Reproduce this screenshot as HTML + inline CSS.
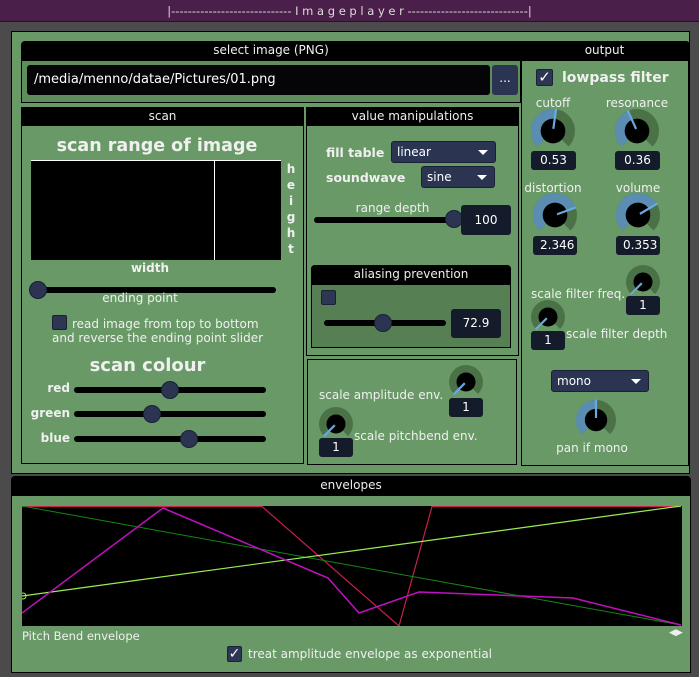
<!DOCTYPE html>
<html><head><meta charset="utf-8">
<style>
*{margin:0;padding:0;box-sizing:border-box}
body{width:699px;height:677px;background:#4b4b4b;font-family:"DejaVu Sans","Liberation Sans",sans-serif;color:#f0f0f0;position:relative;overflow:hidden;font-size:12px}
.a{position:absolute}
.hdr{position:absolute;background:#000;color:#eee;text-align:center;font-size:12px;line-height:19px;border-radius:4px 4px 0 0}
.pan{position:absolute;border:1px solid #000}
.box{position:absolute;background:#141b2b;border-radius:3px;color:#fff;text-align:center;font-size:12px}
.tr{position:absolute;height:6px;background:#000;border-radius:3px}
.th{position:absolute;width:18px;height:18px;border-radius:50%;background:#2b3552;border:1px solid #1a2035}
.cb{position:absolute;width:15px;height:15px;background:#2d3754;border:1px solid #1a2035;border-radius:2px}
.dd{position:absolute;background:#2b3552;border:1px solid #1a2035;border-radius:3px;color:#fff;font-size:12px;padding-left:5px}
.dd:after{content:"";position:absolute;right:7px;top:50%;margin-top:-2px;border-left:5px solid transparent;border-right:5px solid transparent;border-top:5px solid #fff}
.t{position:absolute;white-space:nowrap}
.b{font-weight:bold}
</style></head><body>
<div class="a" style="left:0;top:0;width:699px;height:22px;background:#4a1f4a;border-bottom:1px solid #2a102a"></div>
<div class="t" style="left:0;width:699px;top:4px;text-align:center;font-size:11.5px;color:#ddd">|----------------------------- I m a g e p l a y e r -----------------------------|</div>

<div class="a" style="left:11px;top:31px;width:679px;height:443px;background:#689966;border:1px solid #000"></div>

<div class="hdr" style="left:21px;top:41px;width:669px;height:20px"></div>
<div class="t" style="left:21px;width:500px;top:43px;text-align:center">select image (PNG)</div>
<div class="t" style="left:521px;width:167px;top:43px;text-align:center">output</div>
<div class="a" style="left:21px;top:61px;width:500px;height:42px;background:#5e8e5c;border:1px solid #000;border-top:0"></div>
<div class="box" style="left:27px;top:65px;width:463px;height:30px;text-align:left;padding-left:7px;line-height:30px;font-size:13px;background:#050508">/media/menno/datae/Pictures/01.png</div>
<div class="box" style="left:492px;top:65px;width:26px;height:30px;line-height:26px;background:#2b3552">...</div>

<div class="pan" style="left:21px;top:107px;width:283px;height:357px"></div>
<div class="hdr" style="left:21px;top:107px;width:283px;height:19px">scan</div>
<div class="t b" style="left:22px;width:270px;top:136px;text-align:center;font-size:17.5px">scan range of image</div>
<div class="a" style="left:31px;top:160px;width:250px;height:100px;background:#000;border-top:1px solid #fff"></div>
<div class="a" style="left:214px;top:160px;width:1px;height:100px;background:#fff"></div>
<div class="t b" style="left:286px;top:161px;font-size:12px;line-height:16px;text-align:center;width:10px">h<br>e<br>i<br>g<br>h<br>t</div>
<div class="t b" style="left:100px;width:100px;top:261px;text-align:center">width</div>
<div class="tr" style="left:33px;top:287px;width:243px"></div><div class="th" style="left:29px;top:281px"></div>
<div class="t" style="left:80px;width:120px;top:291px;text-align:center">ending point</div>
<div class="cb" style="left:52px;top:315px"></div>
<div class="t" style="left:72px;top:317px;font-size:12px">read image from top to bottom</div>
<div class="t" style="left:52px;top:331px;font-size:12px">and reverse the ending point slider</div>
<div class="t b" style="left:40px;width:215px;top:355px;text-align:center;font-size:18px">scan colour</div>
<div class="t b" style="left:20px;width:50px;top:381px;text-align:right">red</div>
<div class="t b" style="left:20px;width:50px;top:406px;text-align:right">green</div>
<div class="t b" style="left:20px;width:50px;top:431px;text-align:right">blue</div>
<div class="tr" style="left:74px;top:387px;width:192px"></div><div class="th" style="left:161px;top:381px"></div>
<div class="tr" style="left:74px;top:411px;width:192px"></div><div class="th" style="left:143px;top:405px"></div>
<div class="tr" style="left:74px;top:436px;width:192px"></div><div class="th" style="left:180px;top:430px"></div>

<div class="pan" style="left:306px;top:107px;width:213px;height:249px"></div>
<div class="hdr" style="left:306px;top:107px;width:213px;height:19px">value manipulations</div>
<div class="t b" style="left:326px;top:145px;font-size:12.5px">fill table</div>
<div class="dd" style="left:391px;top:141px;width:105px;height:22px;line-height:20px">linear</div>
<div class="t b" style="left:326px;top:170px;font-size:12.5px">soundwave</div>
<div class="dd" style="left:421px;top:166px;width:74px;height:22px;line-height:20px">sine</div>
<div class="t" style="left:340px;width:105px;top:201px;text-align:center">range depth</div>
<div class="tr" style="left:314px;top:217px;width:143px"></div><div class="th" style="left:445px;top:210px"></div>
<div class="box" style="left:461px;top:205px;width:50px;height:30px;line-height:30px">100</div>
<div class="a" style="left:311px;top:265px;width:200px;height:83px;background:#567f54;border:1px solid #000;border-radius:4px 4px 0 0"></div>
<div class="hdr" style="left:311px;top:265px;width:200px;height:20px">aliasing prevention</div>
<div class="cb" style="left:321px;top:290px"></div>
<div class="tr" style="left:324px;top:320px;width:122px"></div><div class="th" style="left:374px;top:314px"></div>
<div class="box" style="left:451px;top:309px;width:50px;height:29px;line-height:29px">72.9</div>

<div class="pan" style="left:307px;top:359px;width:210px;height:106px"></div>
<div class="t" style="left:319px;top:388px;font-size:12px">scale amplitude env.</div>
<div class="t" style="left:354px;top:429px;font-size:12px">scale pitchbend env.</div>
<div class="box" style="left:449px;top:398px;width:34px;height:19px;line-height:19px">1</div>
<div class="box" style="left:319px;top:438px;width:34px;height:19px;line-height:19px">1</div>

<div class="pan" style="left:521px;top:60px;width:168px;height:406px;border-top:0"></div>
<div class="cb" style="left:536px;top:69px;width:17px;height:17px;color:#fff;font-size:15px;line-height:14px;text-align:center">✓</div>
<div class="t b" style="left:562px;top:70px;font-size:14px">lowpass filter</div>
<div class="t" style="left:513px;width:80px;top:96px;text-align:center">cutoff</div>
<div class="t" style="left:597px;width:80px;top:96px;text-align:center">resonance</div>
<div class="box" style="left:531px;top:151px;width:45px;height:19px;line-height:19px">0.53</div>
<div class="box" style="left:615px;top:151px;width:45px;height:19px;line-height:19px">0.36</div>
<div class="t" style="left:513px;width:80px;top:181px;text-align:center">distortion</div>
<div class="t" style="left:598px;width:80px;top:181px;text-align:center">volume</div>
<div class="box" style="left:533px;top:236px;width:44px;height:19px;line-height:19px;overflow:hidden;text-align:left;padding-left:7px">2.346</div>
<div class="box" style="left:616px;top:236px;width:44px;height:19px;line-height:19px;overflow:hidden;text-align:left;padding-left:7px">0.353</div>
<div class="t" style="left:531px;top:287px;font-size:12px">scale filter freq.</div>
<div class="box" style="left:626px;top:296px;width:34px;height:19px;line-height:19px">1</div>
<div class="t" style="left:566px;top:327px;font-size:12px">scale filter depth</div>
<div class="box" style="left:531px;top:331px;width:34px;height:19px;line-height:19px">1</div>
<div class="dd" style="left:551px;top:370px;width:98px;height:22px;line-height:20px">mono</div>
<div class="t" style="left:552px;width:80px;top:441px;text-align:center">pan if mono</div>

<svg class="a" style="left:0;top:0" width="699" height="677" id="kn"></svg>

<div class="a" style="left:11px;top:476px;width:680px;height:197px;background:#689966;border:1px solid #000;border-radius:5px 5px 0 0"></div>
<div class="hdr" style="left:11px;top:476px;width:680px;height:20px">envelopes</div>
<svg class="a" style="left:22px;top:506px" width="660" height="120">
<rect x="0" y="0" width="660" height="120" fill="#000"/>
<polyline points="0,0.5 240,0.5 377,120 410,0.5 659,0.5" fill="none" stroke="#c8204a" stroke-width="1.2"/>
<line x1="0" y1="0" x2="659" y2="119" stroke="#118811" stroke-width="1"/>
<line x1="0" y1="90" x2="659" y2="0" stroke="#99ee55" stroke-width="1.2"/>
<polyline points="0,107 141,2 306,72 337,107 397,86 551,92 659,119" fill="none" stroke="#c010c0" stroke-width="1.5"/>
<circle cx="1" cy="90" r="3" fill="none" stroke="#99ee55"/>
</svg>
<div class="t" style="left:22px;top:629px;font-size:11.5px">Pitch Bend envelope</div>
<div class="t" style="left:669px;top:628px;font-size:9px">◀▶</div>
<div class="cb" style="left:227px;top:646px;width:15px;height:16px;color:#fff;font-size:14px;line-height:14px;text-align:center">✓</div>
<div class="t" style="left:248px;top:647px;font-size:12px">treat amplitude envelope as exponential</div>

<script>
function pt(cx,cy,r,a){a=(a-90)*Math.PI/180;return [cx+r*Math.cos(a),cy+r*Math.sin(a)];}
function arc(cx,cy,R,r,a0,a1,col){
 var p1=pt(cx,cy,R,a0),p2=pt(cx,cy,R,a1),p3=pt(cx,cy,r,a1),p4=pt(cx,cy,r,a0);
 var l=(a1-a0)>180?1:0;
 return '<path d="M'+p1+' A'+R+','+R+' 0 '+l+' 1 '+p2+' L'+p3+' A'+r+','+r+' 0 '+l+' 0 '+p4+'Z" fill="'+col+'"/>';
}
function knob(cx,cy,R,v){
 var s='',av=-135+270*v;
 s+=arc(cx,cy,R,R*0.5,-135,135,'#4a7246');
 if(v>0.01)s+=arc(cx,cy,R,R*0.5,-135,av,'#5b8db3');
 s+='<circle cx="'+cx+'" cy="'+cy+'" r="'+(R*0.56)+'" fill="#000"/>';
 var q=pt(cx,cy,R*1.02,av),q0=pt(cx,cy,R*0.1,av);
 s+='<line x1="'+q0[0]+'" y1="'+q0[1]+'" x2="'+q[0]+'" y2="'+q[1]+'" stroke="#6aa8e0" stroke-width="2.2"/>';
 return s;
}
var h='';
h+=knob(553,131,22,0.53);
h+=knob(637,131,22,0.41);
h+=knob(555,215,22,0.76);
h+=knob(638,215,22,0.72);
h+=knob(643,282,17,0);
h+=knob(548,317,17,0);
h+=knob(466,382,17,0);
h+=knob(336,424,17,0);
h+=knob(596,420,20,0.5);
document.getElementById('kn').innerHTML=h;
</script>
</body></html>
